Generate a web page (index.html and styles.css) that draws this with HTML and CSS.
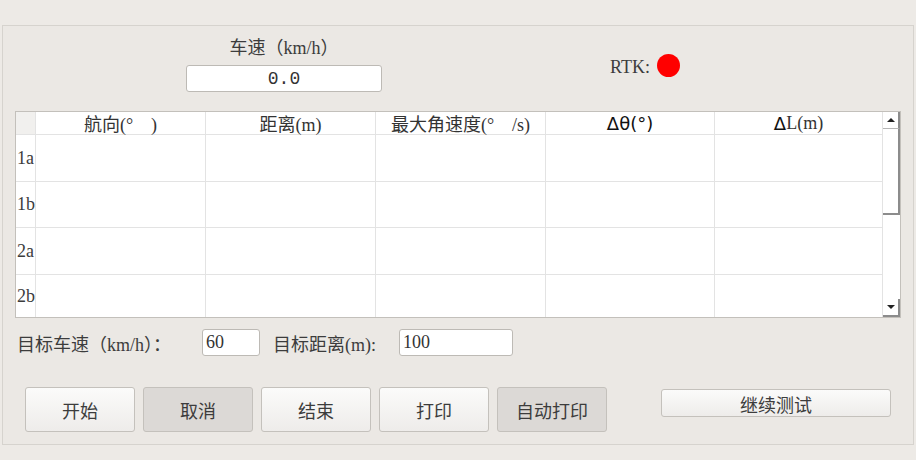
FILE: index.html
```html
<!DOCTYPE html>
<html lang="zh-CN">
<head>
<meta charset="UTF-8" />
<title>测试面板</title>
<link rel="stylesheet" href="styles.css">
</head>
<body>

<div class="panel">
  <div class="top">
    <div class="speed">
      <div class="speed-title">车速（km/h）</div>
      <input class="field speed-field" type="text" value="0.0" readonly />
    </div>
    <div class="rtk">
      <span>RTK:</span>
      <span class="led"></span>
    </div>
  </div>

  <div class="grid">
    <div class="cell corner"></div>
    <div class="cell head">航向(°　)</div>
    <div class="cell head">距离(m)</div>
    <div class="cell head">最大角速度(°　/s)</div>
    <div class="cell head sans">Δθ(°)</div>
    <div class="cell head"><span class="sans">Δ</span>L(m)</div>

    <div class="cell rowhead">1a</div>
    <div class="cell"></div><div class="cell"></div><div class="cell"></div><div class="cell"></div><div class="cell"></div>
    <div class="cell rowhead">1b</div>
    <div class="cell"></div><div class="cell"></div><div class="cell"></div><div class="cell"></div><div class="cell"></div>
    <div class="cell rowhead">2a</div>
    <div class="cell"></div><div class="cell"></div><div class="cell"></div><div class="cell"></div><div class="cell"></div>
    <div class="cell rowhead last">2b</div>
    <div class="cell last"></div><div class="cell last"></div><div class="cell last"></div><div class="cell last"></div><div class="cell last"></div>

    <div class="scrollbar">
      <div class="sb-up"><span class="arrow-up"></span></div>
      <div class="sb-thumb"></div>
      <div class="sb-track"></div>
      <div class="sb-down"><span class="arrow-down"></span></div>
    </div>
  </div>

  <div class="targets">
    <label class="lbl lbl-speed">目标车速（km/h）：</label>
    <input class="field small" type="text" value="60" />
    <label class="lbl lbl-dist">目标距离(m):</label>
    <input class="field wide" type="text" value="100" />
  </div>

  <div class="actions">
    <button class="btn">开始</button>
    <button class="btn dim">取消</button>
    <button class="btn">结束</button>
    <button class="btn">打印</button>
    <button class="btn dim">自动打印</button>
    <button class="btn long">继续测试</button>
  </div>
</div>

</body>
</html>
```

FILE: styles.css
```css
body {
  margin: 0;
  background-color: #edeae6;
  color: #3c3c3c;
  font-family: "Liberation Serif", "Noto Sans CJK SC", serif;
  font-size: 18px;
  width: 916px;
  height: 460px;
  overflow: hidden;
}
.panel {
  margin: 25px 0 0 2px;
  width: 910px;
  border: 1px solid #d6d3ce;
  background-color: #ebe8e4;
  padding-bottom: 12px;
}
.top {
  display: flex;
  height: 85px;
  padding-left: 183px;
}
.speed {
  width: 196px;
  display: flex;
  flex-direction: column;
  align-items: center;
}
.speed-title {
  margin-top: 11px;
  line-height: 22px;
}
.field {
  box-sizing: border-box;
  height: 27px;
  background: #fff;
  border: 1px solid #bdbab5;
  border-radius: 3px;
  font-family: "Liberation Serif", "Noto Sans CJK SC", serif;
  font-size: 18px;
  color: #333;
  padding: 0 3px;
  outline: none;
}
.speed-field {
  margin-top: 6px;
  width: 196px;
  text-align: center;
  font-family: "Liberation Mono", monospace;
}
.rtk {
  display: flex;
  align-items: center;
  gap: 7px;
  margin-left: 228px;
  margin-top: 28px;
  height: 23px;
  align-self: flex-start;
}
.rtk span:first-child {
  padding-top: 3px;
}
.led {
  width: 23px;
  height: 23px;
  border-radius: 50%;
  background: #ff0000;
}

/* table */
.grid {
  margin-left: 12px;
  width: 884px;
  display: grid;
  grid-template-columns: 20px 170px 170px 170px 169px 168px 17px;
  grid-template-rows: 23px 47px 46px 47px 42px;
  border: 1px solid #c3c0bb;
  background: #fff;
}
.cell {
  box-sizing: border-box;
  border-right: 1px solid #e3e3e3;
  border-bottom: 1px solid #e3e3e3;
  display: flex;
  align-items: center;
}
.cell.last {
  border-bottom: none;
}
.corner {
  background: #f1f0ee;
}
.head {
  justify-content: center;
  color: #333;
}
.sans {
  font-family: "DejaVu Sans", "Liberation Sans", sans-serif;
  font-size: 18px;
  color: #111;
}
.rowhead {
  padding-left: 1px;
}
.scrollbar {
  grid-column: 7;
  grid-row: 1 / -1;
  display: flex;
  flex-direction: column;
  background: #fff;
}
.sb-up {
  height: 16px;
  border-right: 2px solid #8c8c8c;
  border-bottom: 1px solid #b5b5b5;
  display: flex;
  align-items: center;
  justify-content: center;
}
.sb-thumb {
  height: 84px;
  border-right: 2px solid #8c8c8c;
  border-bottom: 2px solid #8c8c8c;
}
.sb-track {
  flex: 1;
}
.sb-down {
  height: 16px;
  border-right: 2px solid #8c8c8c;
  border-bottom: 2px solid #8c8c8c;
  display: flex;
  align-items: center;
  justify-content: center;
}
.arrow-up {
  width: 0;
  height: 0;
  border-left: 4px solid transparent;
  border-right: 4px solid transparent;
  border-bottom: 4px solid #222;
}
.arrow-down {
  width: 0;
  height: 0;
  border-left: 4px solid transparent;
  border-right: 4px solid transparent;
  border-top: 4px solid #222;
}

/* targets */
.targets {
  display: flex;
  align-items: center;
  margin-top: 11px;
  padding-left: 14px;
}
.lbl {
  white-space: nowrap;
}
.lbl-speed {
  width: 185px;
}
.lbl-dist {
  margin-left: 13px;
  width: 126px;
}
.small {
  width: 58px;
}
.wide {
  width: 114px;
}

/* buttons */
.actions {
  display: flex;
  align-items: flex-start;
  gap: 8px;
  margin-top: 31px;
  padding-left: 22px;
}
.btn {
  width: 110px;
  height: 45px;
  border: 1px solid #c4c1bc;
  border-radius: 3px;
  background: linear-gradient(#fbfbfa, #eeecea);
  font-family: "Liberation Serif", "Noto Sans CJK SC", serif;
  font-size: 18px;
  color: #3c3c3c;
}
.btn.dim {
  background: #dcd9d6;
}
.btn.long {
  width: 230px;
  height: 28px;
  margin-left: 46px;
  margin-top: 2px;
}
```
